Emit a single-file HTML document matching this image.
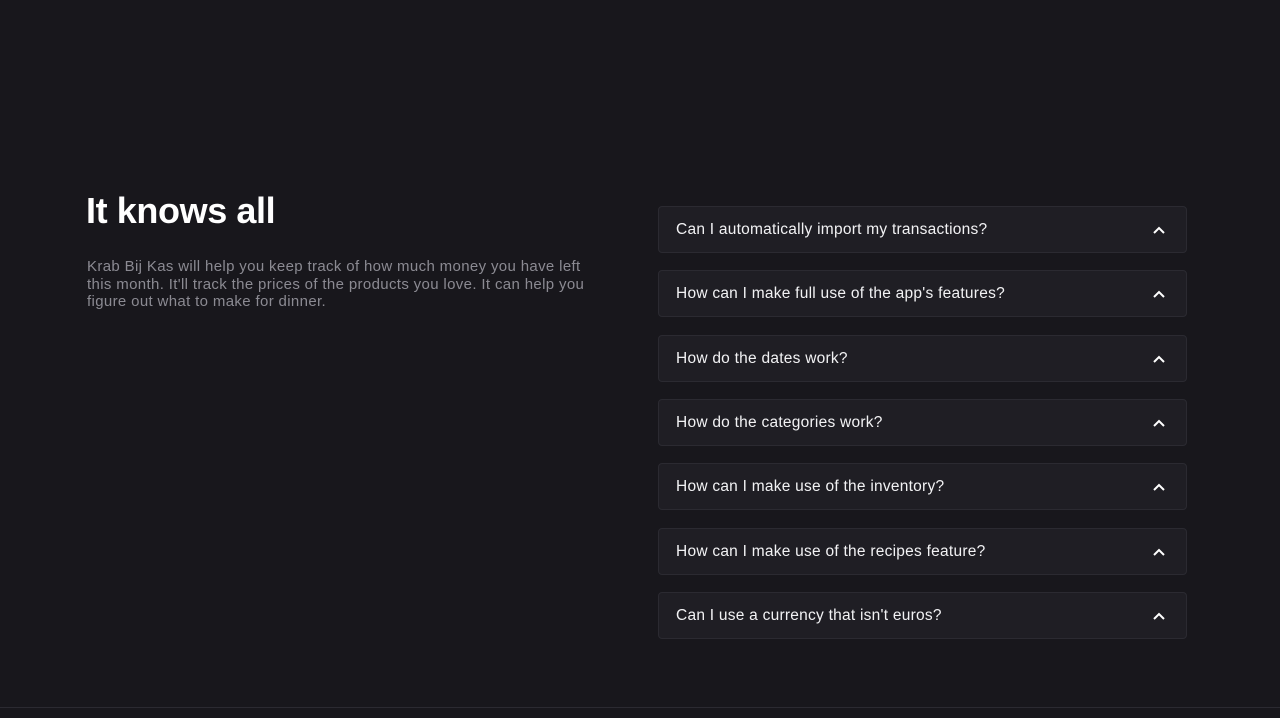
<!DOCTYPE html>
<html><head><style>
html,body{margin:0;padding:0}
body{width:1280px;height:718px;background:#18171c;font-family:"Liberation Sans",sans-serif;position:relative;overflow:hidden}
h1{position:absolute;left:86px;top:190px;margin:0;font-size:36px;font-weight:bold;color:#fff;letter-spacing:-0.4px}
p{position:absolute;left:87px;top:258px;margin:0;width:518px;font-size:15px;line-height:17.5px;color:#8b8a92;letter-spacing:0.35px}
.item{position:absolute;left:658px;width:529px;height:47px;background:#1f1e24;border:1px solid #2b2a31;border-radius:4px;box-sizing:border-box}
.item span{position:absolute;left:17px;top:14px;font-size:15.5px;color:#f2f2f4;letter-spacing:0.25px}
.item svg{position:absolute;left:493px;top:17px}
.line{position:absolute;left:0;top:707px;width:1280px;height:1px;background:#2b2a31}
</style></head><body>
<h1>It knows all</h1>
<p>Krab Bij Kas will help you keep track of how much money you have left this month. It'll track the prices of the products you love. It can help you figure out what to make for dinner.</p>
<div class="item" style="top:206px"><span>Can I automatically import my transactions?</span><svg width="14" height="12" viewBox="0 0 14 12"><path d="M2 9L7 4L12 9" stroke="#fff" stroke-width="2" fill="none"/></svg></div>
<div class="item" style="top:270px"><span>How can I make full use of the app's features?</span><svg width="14" height="12" viewBox="0 0 14 12"><path d="M2 9L7 4L12 9" stroke="#fff" stroke-width="2" fill="none"/></svg></div>
<div class="item" style="top:335px"><span>How do the dates work?</span><svg width="14" height="12" viewBox="0 0 14 12"><path d="M2 9L7 4L12 9" stroke="#fff" stroke-width="2" fill="none"/></svg></div>
<div class="item" style="top:399px"><span>How do the categories work?</span><svg width="14" height="12" viewBox="0 0 14 12"><path d="M2 9L7 4L12 9" stroke="#fff" stroke-width="2" fill="none"/></svg></div>
<div class="item" style="top:463px"><span>How can I make use of the inventory?</span><svg width="14" height="12" viewBox="0 0 14 12"><path d="M2 9L7 4L12 9" stroke="#fff" stroke-width="2" fill="none"/></svg></div>
<div class="item" style="top:528px"><span>How can I make use of the recipes feature?</span><svg width="14" height="12" viewBox="0 0 14 12"><path d="M2 9L7 4L12 9" stroke="#fff" stroke-width="2" fill="none"/></svg></div>
<div class="item" style="top:592px"><span>Can I use a currency that isn't euros?</span><svg width="14" height="12" viewBox="0 0 14 12"><path d="M2 9L7 4L12 9" stroke="#fff" stroke-width="2" fill="none"/></svg></div>
<div class="line"></div>
</body></html>
